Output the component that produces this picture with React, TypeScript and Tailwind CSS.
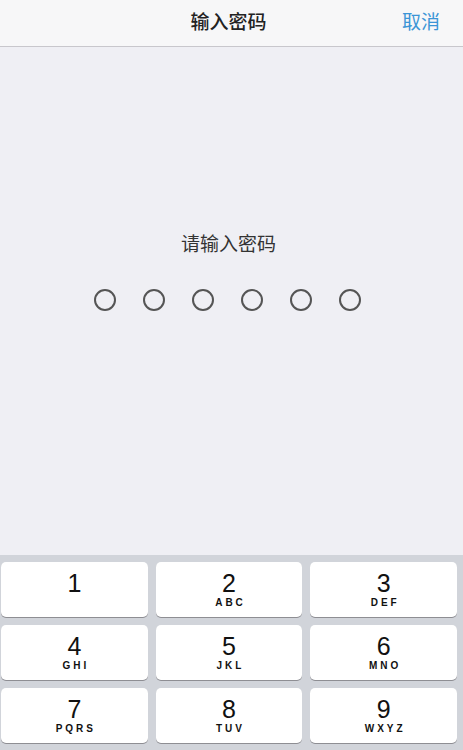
const keys = [
  { digit: "1", letters: "" },
  { digit: "2", letters: "ABC" },
  { digit: "3", letters: "DEF" },
  { digit: "4", letters: "GHI" },
  { digit: "5", letters: "JKL" },
  { digit: "6", letters: "MNO" },
  { digit: "7", letters: "PQRS" },
  { digit: "8", letters: "TUV" },
  { digit: "9", letters: "WXYZ" },
];

const cjk = "font-['Liberation_Sans','Noto_Sans_CJK_SC',sans-serif]";

export default function App() {
  return (
    <div className={`flex h-[750px] w-full flex-col bg-[#efeff4] ${cjk}`}>
      <header className="relative flex h-[47px] shrink-0 items-center justify-center border-b border-[#c8c7cc] bg-[#f7f7f8] pr-[6px]">
        <h1 className="text-[19px] font-medium text-[#222]">输入密码</h1>
        <button className="absolute right-[23px] top-1/2 -translate-y-1/2 text-[19px] text-[#3b95d6]">
          取消
        </button>
      </header>

      <main className="flex flex-1 flex-col items-center pr-[6px] pt-[186px]">
        <p className="text-[19px] leading-[24px] text-[#333]">请输入密码</p>
        <div className="mt-[32px] flex gap-[27px] pr-[3px]">
          {Array.from({ length: 6 }).map((_, i) => (
            <span
              key={i}
              className="h-[22px] w-[22px] rounded-full border-2 border-[#555]"
            />
          ))}
        </div>
      </main>

      <div className="grid shrink-0 grid-cols-3 gap-2 bg-[#d1d4da] pb-[7px] pl-[1px] pr-[6px] pt-[7px]">
        {keys.map((k) => (
          <button
            key={k.digit}
            className="flex h-[55px] flex-col items-center rounded-[5px] bg-white pt-[6px] text-[#111] shadow-[0_1px_0_#8e8e93]"
          >
            <span className="text-[25px] leading-[30px]">{k.digit}</span>
            <span className="pl-[3px] text-[10px] font-bold leading-[10px] tracking-[3px]">
              {k.letters}
            </span>
          </button>
        ))}
      </div>
    </div>
  );
}
